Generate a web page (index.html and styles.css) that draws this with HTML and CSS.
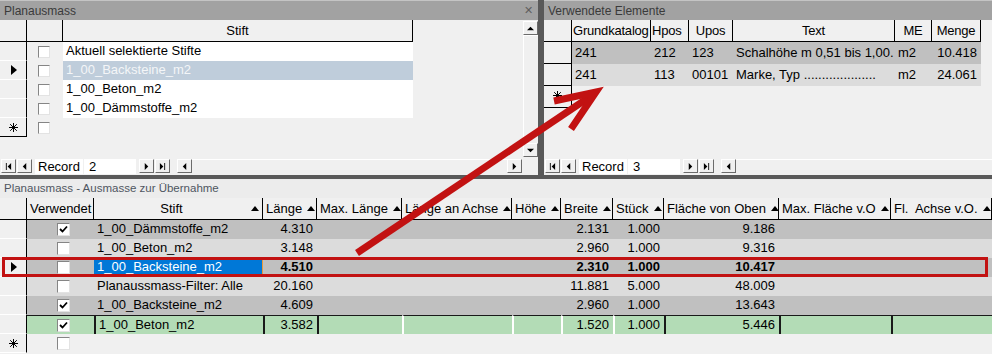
FILE: index.html
```html
<!DOCTYPE html>
<html lang="de">
<head>
    <meta charset="UTF-8">
    <title>Planausmass</title>
    <link rel="stylesheet" href="styles.css">
</head>
<body>
<div class="app">
    <div class="top">
        <!-- Planausmass (Stifte) -->
        <section class="pane pane-left">
            <div class="pane-title">Planausmass <span class="close">&#x2715;</span></div>
            <div class="pane-body">
                <div class="sheet sheet-stifte">
                    <div class="row head">
                        <div class="sel"></div>
                        <div class="c"></div>
                        <div class="c center">Stift</div>
                    </div>
                    <div class="row">
                        <div class="sel"></div>
                        <div class="c chk"><span class="cb"></span></div>
                        <div class="c txt">Aktuell selektierte Stifte</div>
                    </div>
                    <div class="row current">
                        <div class="sel"><i class="ptr"></i></div>
                        <div class="c chk"><span class="cb"></span></div>
                        <div class="c txt">1_00_Backsteine_m2</div>
                    </div>
                    <div class="row">
                        <div class="sel"></div>
                        <div class="c chk"><span class="cb"></span></div>
                        <div class="c txt">1_00_Beton_m2</div>
                    </div>
                    <div class="row">
                        <div class="sel"></div>
                        <div class="c chk"><span class="cb"></span></div>
                        <div class="c txt">1_00_Dämmstoffe_m2</div>
                    </div>
                    <div class="row newrow">
                        <div class="sel"><svg class="star" viewBox="0 0 9 9"><path d="M4.5 0v9M0 4.5h9M1.2 1.2l6.6 6.6M7.8 1.2l-6.6 6.6"/></svg></div>
                        <div class="c chk"><span class="cb"></span></div>
                    </div>
                </div>
                <div class="vscroll">
                    <span class="nbtn"><svg viewBox="0 0 8 8"><path d="M0 6h8L4 2z"/></svg></span>
                    <span class="vtrack"></span>
                    <span class="nbtn"><svg viewBox="0 0 8 8"><path d="M0 2h8L4 6z"/></svg></span>
                </div>
            </div>
            <div class="navbar">
                <span class="nbtn"><svg viewBox="0 0 8 8"><path d="M1 0h1v8H1zM7 0v8L3 4z"/></svg></span>
                <span class="nbtn"><svg viewBox="0 0 8 8"><path d="M6 0v8L2 4z"/></svg></span>
                <span class="rec"><span class="rec-label">Record</span><span class="rec-num">2</span></span>
                <span class="nbtn"><svg viewBox="0 0 8 8"><path d="M2 0v8l4-4z"/></svg></span>
                <span class="nbtn"><svg viewBox="0 0 8 8"><path d="M1 0v8l4-4zM6 0h1v8H6z"/></svg></span>
                <div class="hscroll">
                    <span class="nbtn"><svg viewBox="0 0 8 8"><path d="M6 0v8L2 4z"/></svg></span>
                    <span class="htrack"></span>
                    <span class="nbtn"><svg viewBox="0 0 8 8"><path d="M2 0v8l4-4z"/></svg></span>
                </div>
                <span class="corner"></span>
            </div>
        </section>

        <div class="vsplit"></div>

        <!-- Verwendete Elemente -->
        <section class="pane pane-right">
            <div class="pane-title">Verwendete Elemente</div>
            <div class="pane-body">
                <div class="sheet sheet-elemente">
                    <div class="row head">
                        <div class="sel"></div>
                        <div class="c">Grundkatalog</div>
                        <div class="c">Hpos</div>
                        <div class="c center">Upos</div>
                        <div class="c center">Text</div>
                        <div class="c center">ME</div>
                        <div class="c center">Menge</div>
                    </div>
                    <div class="row dark">
                        <div class="sel"></div>
                        <div class="c">241</div>
                        <div class="c">212</div>
                        <div class="c">123</div>
                        <div class="c">Schalhöhe m 0,51 bis 1,00.</div>
                        <div class="c">m2</div>
                        <div class="c num">10.418</div>
                    </div>
                    <div class="row light">
                        <div class="sel"></div>
                        <div class="c">241</div>
                        <div class="c">113</div>
                        <div class="c">00101</div>
                        <div class="c">Marke, Typ ....................</div>
                        <div class="c">m2</div>
                        <div class="c num">24.061</div>
                    </div>
                    <div class="row newrow">
                        <div class="sel"><svg class="star" viewBox="0 0 9 9"><path d="M4.5 0v9M0 4.5h9M1.2 1.2l6.6 6.6M7.8 1.2l-6.6 6.6"/></svg></div>
                    </div>
                </div>
            </div>
            <div class="navbar">
                <span class="nbtn"><svg viewBox="0 0 8 8"><path d="M1 0h1v8H1zM7 0v8L3 4z"/></svg></span>
                <span class="nbtn"><svg viewBox="0 0 8 8"><path d="M6 0v8L2 4z"/></svg></span>
                <span class="rec"><span class="rec-label">Record</span><span class="rec-num">3</span></span>
                <span class="nbtn"><svg viewBox="0 0 8 8"><path d="M2 0v8l4-4z"/></svg></span>
                <span class="nbtn"><svg viewBox="0 0 8 8"><path d="M1 0v8l4-4zM6 0h1v8H6z"/></svg></span>
                <div class="hscroll">
                    <span class="nbtn"><svg viewBox="0 0 8 8"><path d="M6 0v8L2 4z"/></svg></span>
                    <span class="htrack"></span>
                </div>
            </div>
        </section>
    </div>

    <div class="hsplit"></div>

    <!-- Ausmasse zur Übernahme -->
    <section class="lower">
        <div class="lower-title">Planausmass - Ausmasse zur Übernahme</div>
        <div class="sheet sheet-ausmasse">
            <div class="row head">
                <div class="sel"></div>
                <div class="c">Verwendet</div>
                <div class="c hs center"><span class="grow">Stift</span><i class="sort"></i></div>
                <div class="c hs">Länge<i class="sort"></i></div>
                <div class="c hs">Max. Länge<i class="sort"></i></div>
                <div class="c hs">Länge an Achse<i class="sort"></i></div>
                <div class="c hs">Höhe<i class="sort"></i></div>
                <div class="c hs">Breite<i class="sort"></i></div>
                <div class="c hs">Stück<i class="sort"></i></div>
                <div class="c hs">Fläche von Oben<i class="sort"></i></div>
                <div class="c hs">Max. Fläche v.O<i class="sort"></i></div>
                <div class="c hs">Fl.&nbsp; Achse v.O.<i class="sort"></i></div>
            </div>
            <div class="row dark">
                <div class="sel"></div>
                <div class="c chk"><span class="cb on"><svg viewBox="0 0 9 9"><path d="M1 4l2.5 2.5L8 1.5"/></svg></span></div>
                <div class="c">1_00_Dämmstoffe_m2</div>
                <div class="c num">4.310</div>
                <div class="c"></div><div class="c"></div><div class="c"></div>
                <div class="c num">2.131</div>
                <div class="c num">1.000</div>
                <div class="c num">9.186</div>
                <div class="c"></div><div class="c"></div>
            </div>
            <div class="row light">
                <div class="sel"></div>
                <div class="c chk"><span class="cb"></span></div>
                <div class="c">1_00_Beton_m2</div>
                <div class="c num">3.148</div>
                <div class="c"></div><div class="c"></div><div class="c"></div>
                <div class="c num">2.960</div>
                <div class="c num">1.000</div>
                <div class="c num">9.316</div>
                <div class="c"></div><div class="c"></div>
            </div>
            <div class="row dark active">
                <div class="sel"><i class="ptr"></i></div>
                <div class="c chk"><span class="cb"></span></div>
                <div class="c picked">1_00_Backsteine_m2</div>
                <div class="c num">4.510</div>
                <div class="c"></div><div class="c"></div><div class="c"></div>
                <div class="c num">2.310</div>
                <div class="c num">1.000</div>
                <div class="c num">10.417</div>
                <div class="c"></div><div class="c"></div>
            </div>
            <div class="row light">
                <div class="sel"></div>
                <div class="c chk"><span class="cb"></span></div>
                <div class="c">Planaussmass-Filter: Alle</div>
                <div class="c num">20.160</div>
                <div class="c"></div><div class="c"></div><div class="c"></div>
                <div class="c num">11.881</div>
                <div class="c num">5.000</div>
                <div class="c num">48.009</div>
                <div class="c"></div><div class="c"></div>
            </div>
            <div class="row dark">
                <div class="sel"></div>
                <div class="c chk"><span class="cb on"><svg viewBox="0 0 9 9"><path d="M1 4l2.5 2.5L8 1.5"/></svg></span></div>
                <div class="c">1_00_Backsteine_m2</div>
                <div class="c num">4.609</div>
                <div class="c"></div><div class="c"></div><div class="c"></div>
                <div class="c num">2.960</div>
                <div class="c num">1.000</div>
                <div class="c num">13.643</div>
                <div class="c"></div><div class="c"></div>
            </div>
            <div class="row green">
                <div class="sel"></div>
                <div class="c chk"><span class="cb on"><svg viewBox="0 0 9 9"><path d="M1 4l2.5 2.5L8 1.5"/></svg></span></div>
                <div class="c dk">1_00_Beton_m2</div>
                <div class="c dk num">3.582</div>
                <div class="c dk"></div>
                <div class="c wt"></div>
                <div class="c wt"></div>
                <div class="c wt num">1.520</div>
                <div class="c wt num">1.000</div>
                <div class="c dk num">5.446</div>
                <div class="c dk"></div>
                <div class="c dk"></div>
            </div>
            <div class="row newrow">
                <div class="sel"><svg class="star" viewBox="0 0 9 9"><path d="M4.5 0v9M0 4.5h9M1.2 1.2l6.6 6.6M7.8 1.2l-6.6 6.6"/></svg></div>
                <div class="c chk"><span class="cb"></span></div>
            </div>
        </div>
    </section>

    <!-- annotation drawn over the screenshot -->
    <svg class="overlay" viewBox="0 0 992 354">
        <rect x="3.5" y="258.5" width="983" height="17" />
        <path class="shaft" d="M357 253L594 94" />
        <path class="head" d="M554 101L596 92L571 129" />
    </svg>
</div>
</body>
</html>
```

FILE: styles.css
```css
* {
    box-sizing: border-box;
}

body {
    margin: 0;
    background-color: #f0f0f0;
    font-family: "Liberation Sans", Arial, sans-serif;
    font-size: 13px;
    color: #000;
}

.app {
    position: relative;
    width: 992px;
    height: 354px;
    overflow: hidden;
}

/* ---------- top half ---------- */

.top {
    display: flex;
    height: 175px;
}

.pane {
    display: flex;
    flex-direction: column;
    background-color: #f0f0f0;
}

.pane-left {
    width: 538px;
}

.pane-right {
    flex: 1;
    min-width: 0;
}

.vsplit {
    width: 6px;
    background-color: #595959;
}

.hsplit {
    height: 4px;
    background-color: #595959;
}

.pane-title {
    display: flex;
    align-items: center;
    justify-content: space-between;
    height: 20px;
    padding: 0 4px;
    background-color: #a2a2a2;
    border-top: 1px solid #c4c4c4;
    color: #3a3a3a;
    font-size: 12px;
}

.close {
    color: #5e5e5e;
    font-size: 11px;
    margin-right: 1px;
}

.pane-body {
    display: flex;
    height: 138px;
}

.pane-body .sheet {
    flex: 1;
}

/* ---------- datasheet rows ---------- */

.row {
    display: grid;
    height: 19px;
    line-height: 18px;
}

.c {
    padding: 0 3px;
    white-space: nowrap;
    overflow: hidden;
}

.center {
    text-align: center;
}

.num {
    text-align: right;
    padding-right: 4px;
}

.sel {
    position: relative;
    background-color: #f0f0f0;
    border-right: 1px solid #000;
    border-bottom: 1px solid #fff;
}

.head {
    height: 22px;
    line-height: 21px;
}

.head .sel,
.head .c {
    background-color: #f0f0f0;
    border-right: 1px solid #000;
    border-bottom: 1px solid #000;
}

.ptr {
    position: absolute;
    left: 11px;
    top: 4px;
    border-top: 5px solid transparent;
    border-bottom: 5px solid transparent;
    border-left: 6px solid #000;
}

.star {
    position: absolute;
    left: 9px;
    top: 5px;
    width: 9px;
    height: 9px;
    stroke: #000;
    stroke-width: 1;
}

.chk {
    display: flex;
    align-items: center;
    justify-content: center;
}

.cb {
    display: flex;
    align-items: center;
    justify-content: center;
    width: 13px;
    height: 13px;
    background-color: #fff;
    border: 1px solid;
    border-color: #858585 #e3e3e3 #e3e3e3 #858585;
}

.cb svg {
    width: 9px;
    height: 9px;
    fill: none;
    stroke: #000;
    stroke-width: 1.8;
}

/* Stifte list (top left) */
.sheet-stifte .row {
    grid-template-columns: 27px 36px 350px;
}

.sheet-stifte .chk {
    padding: 0 3px 0 0;
}

.sheet-stifte .cb {
    width: 12px;
    height: 12px;
}

.sheet-stifte .txt {
    background-color: #fff;
}

.sheet-stifte .current .txt {
    background-color: #bfcddb;
    color: #f4f6f8;
}

.sheet-stifte .newrow .sel {
    border-bottom-color: #000;
}

/* Verwendete Elemente (top right) */
.sheet-elemente .row {
    grid-template-columns: 28px 79px 38px 44px 162px 37px 49px;
    height: 22px;
    line-height: 21px;
}

.sheet-elemente .sel {
    border-bottom: 1px solid #000;
}

.sheet-elemente .head .c {
    padding: 0 1px;
    letter-spacing: -0.2px;
}

.dark .c {
    background-color: #c0c0c0;
}

.light .c {
    background-color: #dcdcdc;
}

/* scrollbars and record navigation */

.vscroll {
    display: flex;
    flex-direction: column;
    width: 16px;
    padding: 1px 0 1px 1px;
}

.vtrack {
    flex: 1;
    border-left: 1px solid #fff;
    border-top: 1px solid #fff;
}

.nbtn {
    display: flex;
    align-items: center;
    justify-content: center;
    width: 15px;
    height: 14px;
    background-color: #f0f0f0;
    border: 1px solid;
    border-color: #fff #6b6b6b #6b6b6b #fff;
}

.nbtn svg {
    width: 7px;
    height: 7px;
    fill: #000;
}

.navbar {
    display: flex;
    align-items: center;
    gap: 1px;
    height: 17px;
    padding: 0 0 1px 1px;
}

.rec {
    display: flex;
    height: 15px;
    margin: 0 2px;
    line-height: 15px;
    font-size: 13px;
}

.rec-label {
    width: 48px;
    padding-left: 3px;
    background-color: #fff;
}

.rec-num {
    width: 52px;
    padding-left: 5px;
    margin-left: 1px;
    background-color: #fff;
}

.hscroll {
    display: flex;
    flex: 1;
    margin-left: 6px;
}

.htrack {
    flex: 1;
    border-top: 1px solid #fff;
    height: 14px;
}

.corner {
    width: 15px;
    height: 15px;
}

/* ---------- lower grid ---------- */

.lower-title {
    height: 19px;
    line-height: 19px;
    padding-left: 4px;
    background-color: #ececec;
    color: #4f5661;
    font-size: 11.5px;
}

.sheet-ausmasse .row {
    grid-template-columns: 27px 67px 169px 54px 85px 110px 49px 52px 51px 115px 112px 101px;
}

.hs {
    display: flex;
    align-items: center;
    gap: 5px;
}

.hs .grow {
    flex: 1;
    text-align: center;
}

.sort {
    border-left: 4px solid transparent;
    border-right: 4px solid transparent;
    border-bottom: 5px solid #000;
}

.sheet-ausmasse .chk {
    padding-left: 8px;
}

.active .c {
    font-weight: bold;
}

.active .picked {
    background-color: #0078d7;
    color: #fff;
    font-weight: normal;
    border-right: 1px solid #e89a3c;
}

.green .c {
    background-color: #b3dcb6;
    border-top: 1px solid #1a1a1a;
}

.green .dk {
    border-left: 2px solid #1a1a1a;
}

.green .wt {
    border-left: 2px solid #fff;
}

/* ---------- annotation ---------- */

.overlay {
    position: absolute;
    left: 0;
    top: 0;
    width: 992px;
    height: 354px;
    pointer-events: none;
    fill: none;
    stroke: #c21212;
}

.overlay rect {
    stroke-width: 3;
}

.overlay .shaft {
    stroke-width: 7;
}

.overlay .head {
    stroke-width: 7;
    stroke-linejoin: miter;
}
```
